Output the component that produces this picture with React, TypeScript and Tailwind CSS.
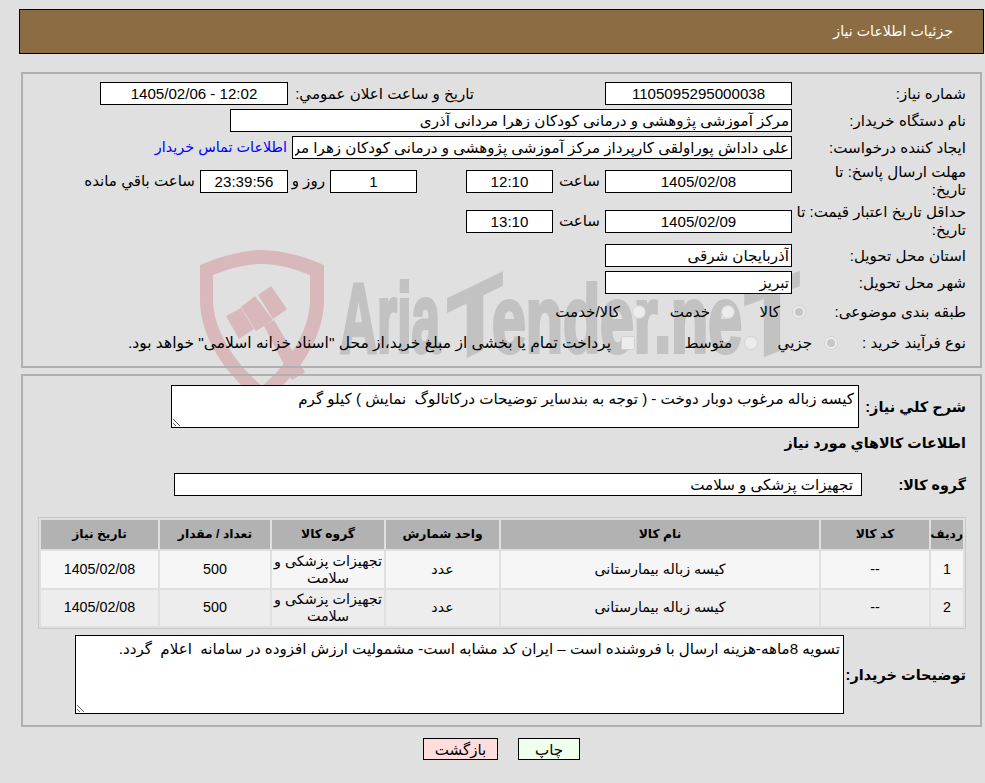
const inputCls = 'h-[23px] border border-black bg-white px-[2px] text-black outline-none';

function Label({ className, children }: { className: string; children: React.ReactNode }) {
  return <div className={`shrink-0 text-right leading-[18px] ${className}`}>{children}</div>;
}

function Radio({ checked }: { checked?: boolean }) {
  return (
    <span className="flex h-[14px] w-[14px] shrink-0 items-center justify-center rounded-full border border-[#d2d2d2] bg-[#ececec]">
      {checked && <span className="h-[8px] w-[8px] rounded-full bg-[#c6c6c6]" />}
    </span>
  );
}

function Watermark() {
  const letters = {
    fill: '#c2c2c2',
    stroke: '#c2c2c2',
    strokeWidth: 4,
    fontWeight: 700,
    fontFamily: "'Liberation Sans', sans-serif",
    lengthAdjust: 'spacingAndGlyphs' as const,
  };
  return (
    <svg className="absolute left-0 top-0 [direction:ltr]" width="985" height="420" viewBox="0 0 985 420">
      <path
        fillRule="evenodd"
        fill="#d8b8ba"
        d="M200 265 C225 255 245 250 262 250 C280 250 300 255 324 265 L324 300 C324 340 295 380 262 402 C230 380 200 340 200 300 Z M213 275 L213 300 C213 332 238 366 262 386 C286 366 310 332 310 300 L310 275 C292 268 278 264 262 264 C246 264 230 268 213 275 Z"
      />
      <path
        fill="#d8b8ba"
        d="M226 316 L241 308 L254 329 L239 339 Z M241 307 L255 296 L273 320 L256 331 Z M258 295 L271 286 L287 309 L273 319 Z M264 326 L274 320 L305 372 L292 380 Z"
      />
      <text {...letters} x="340" y="352" textLength="100" fontSize="98">Aria</text>
      <text {...letters} x="-27" y="0" textLength="54" fontSize="95" transform="translate(475 352) skewY(-26)">T</text>
      <text {...letters} x="492" y="352" textLength="250" fontSize="94">ender.ne</text>
      <text {...letters} x="-27" y="0" textLength="54" fontSize="100" transform="translate(772 352) skewY(-20)">T</text>
    </svg>
  );
}

function TopPanel() {
  return (
    <div className="mx-[2px] mt-[18px] flex h-[296px] flex-col border-2 border-[#b0b0b0] pr-[14px] pt-[8px]">
      <div className="flex h-[23px] items-center">
        <Label className="w-[174px]">شماره نياز:</Label>
        <input readOnly value="1105095295000038" className={`${inputCls} w-[187px] text-center`} />
        <Label className="ms-[131px] w-[181px]">تاريخ و ساعت اعلان عمومي:</Label>
        <input readOnly value="1405/02/06 - 12:02" dir="ltr" className={`${inputCls} mr-[5px] w-[188px] text-center`} />
      </div>
      <div className="mt-[4px] flex h-[23px] items-center">
        <Label className="w-[174px]">نام دستگاه خریدار:</Label>
        <input readOnly value="مرکز آموزشی پژوهشی و درمانی کودکان زهرا مردانی آذری" className={`${inputCls} w-[562px]`} />
      </div>
      <div className="mt-[4px] flex h-[23px] items-center">
        <Label className="w-[174px]">ایجاد کننده درخواست:</Label>
        <input readOnly value="علی داداش پوراولقی کارپرداز مرکز آموزشی پژوهشی و درمانی کودکان زهرا مردانی آذری" className={`${inputCls} w-[500px]`} />
        <a className="ms-[5px] whitespace-nowrap text-[14.4px] text-[#0000ff]">اطلاعات تماس خریدار</a>
      </div>
      <div className="mt-[5px] flex h-[34px] items-center">
        <Label className="w-[174px]">مهلت ارسال پاسخ: تا<br />تاریخ:</Label>
        <input readOnly value="1405/02/08" className={`${inputCls} w-[187px] text-center`} />
        <span className="ms-[5px] w-[47px]">ساعت</span>
        <input readOnly value="12:10" className={`${inputCls} w-[87px] text-center`} />
        <input readOnly value="1" className={`${inputCls} ms-[49px] w-[87px] text-center`} />
        <span className="ms-[5px] w-[37px]">روز و</span>
        <input readOnly value="23:39:56" className={`${inputCls} w-[88px] bg-[#ffffee] text-center`} />
        <span className="ms-[5px] whitespace-nowrap">ساعت باقي مانده</span>
      </div>
      <div className="mt-[6px] flex h-[34px] items-center">
        <Label className="w-[174px]">حداقل تاریخ اعتبار قیمت: تا<br />تاریخ:</Label>
        <input readOnly value="1405/02/09" className={`${inputCls} w-[187px] text-center`} />
        <span className="ms-[5px] w-[47px]">ساعت</span>
        <input readOnly value="13:10" className={`${inputCls} w-[87px] text-center`} />
      </div>
      <div className="mt-[6px] flex h-[23px] items-center">
        <Label className="w-[174px]">استان محل تحویل:</Label>
        <input readOnly value="آذربایجان شرقی" className={`${inputCls} w-[187px]`} />
      </div>
      <div className="mt-[4px] flex h-[23px] items-center">
        <Label className="w-[174px]">شهر محل تحویل:</Label>
        <input readOnly value="تبریز" className={`${inputCls} w-[187px] bg-white`} />
      </div>
      <div className="mt-[8px] flex h-[20px] items-center">
        <Label className="w-[160px] whitespace-nowrap">طبقه بندی موضوعی:</Label>
        <div className="flex w-[71px] items-center gap-[12px]"><Radio checked />کالا</div>
        <div className="flex w-[89px] items-center gap-[11px]"><Radio />خدمت</div>
        <div className="flex items-center gap-[12px] whitespace-nowrap"><Radio />کالا/خدمت</div>
      </div>
      <div className="mt-[11px] flex h-[20px] items-center">
        <Label className="w-[128px] whitespace-nowrap">نوع فرآیند خرید :</Label>
        <div className="flex w-[80px] items-center gap-[12px]"><Radio checked />جزيي</div>
        <div className="flex w-[123px] items-center gap-[12px]"><Radio />متوسط</div>
        <div className="flex items-center gap-[10px] whitespace-nowrap text-[15.5px]">
          <span className="h-[14px] w-[14px] shrink-0 rounded-[2px] border border-[#d2d2d2] bg-[#ececec]" />
          پرداخت تمام یا بخشی از مبلغ خرید،از محل "اسناد خزانه اسلامی" خواهد بود.
        </div>
      </div>
    </div>
  );
}

const headers = ['ردیف', 'کد کالا', 'نام کالا', 'واحد شمارش', 'گروه کالا', 'تعداد / مقدار', 'تاریخ نیاز'];
const rows = ['1', '2'];

function GoodsTable() {
  return (
    <table className="mt-[21px] w-[928px] table-fixed border-separate border-spacing-[2px] border border-[#c8c8c8] text-center text-[14.3px]">
      <colgroup>
        <col className="w-[32px]" />
        <col className="w-[108px]" />
        <col className="w-[318px]" />
        <col className="w-[113px]" />
        <col className="w-[112px]" />
        <col className="w-[110px]" />
        <col className="w-[117px]" />
      </colgroup>
      <thead>
        <tr className="h-[29px] bg-[#b2b2b2] text-[12.3px] font-bold">
          {headers.map((h) => (
            <th key={h} className="p-0 font-bold">{h}</th>
          ))}
        </tr>
      </thead>
      <tbody>
        {rows.map((r) => (
          <tr key={r} className={r === '1' ? 'h-[37px] bg-[#f6f6f6]' : 'h-[36px] bg-[#ededed]'}>
            <td className="p-0">{r}</td>
            <td className="p-0">--</td>
            <td className="p-0">کیسه زباله بیمارستانی</td>
            <td className="p-0">عدد</td>
            <td className="p-0 leading-[17px]">تجهیزات پزشکی و سلامت</td>
            <td className="p-0">500</td>
            <td className="p-0">1405/02/08</td>
          </tr>
        ))}
      </tbody>
    </table>
  );
}

function BottomPanel() {
  return (
    <div className="mx-[2px] mt-[6px] flex h-[353px] flex-col border-2 border-[#b0b0b0] pr-[14px] pt-[9px]">
      <div className="flex items-center">
        <Label className="w-[107px] whitespace-nowrap text-[14.5px] font-bold">شرح كلي نياز:</Label>
        <textarea
          readOnly
          value="کیسه زباله مرغوب دوبار دوخت - ( توجه به بندسایر توضیحات درکاتالوگ  نمایش ) کیلو گرم"
          className="h-[43px] w-[688px] border border-black bg-white px-[4px] py-[2px] outline-none"
        />
      </div>
      <div className="mt-[5px] h-[20px] text-[14.3px] font-bold leading-[20px]">اطلاعات کالاهاي مورد نياز</div>
      <div className="mt-[20px] flex items-center">
        <Label className="w-[104px] whitespace-nowrap text-[14.3px] font-bold">گروه کالا:</Label>
        <input readOnly value="تجهیزات پزشکی و سلامت" className={`${inputCls} w-[688px] !pr-[8px]`} />
      </div>
      <GoodsTable />
      <div className="mt-[6px] flex items-center">
        <Label className="w-[122px] whitespace-nowrap text-[14.5px] font-bold">توضیحات خریدار:</Label>
        <textarea
          readOnly
          value="تسویه 8ماهه-هزینه ارسال با فروشنده است – ایران کد مشابه است- مشمولیت ارزش افزوده در سامانه  اعلام  گردد."
          className="h-[79px] w-[769px] border border-black bg-white px-[3px] py-[2px] outline-none"
        />
      </div>
    </div>
  );
}

export default function App() {
  return (
    <div dir="rtl" className="relative h-[783px] overflow-hidden bg-[#e0e0e0] [font-family:'Liberation_Sans','DejaVu_Sans',sans-serif] text-[15.1px] text-black">
      <Watermark />
      <div className="relative ml-[19px] mr-px pt-[9px]">
        <div className="flex h-[45px] items-center border border-black bg-[#8c6c42] pr-[30px] text-[14.2px] text-white">جزئیات اطلاعات نیاز</div>
        <TopPanel />
        <BottomPanel />
        <div className="mt-[11px] flex justify-center gap-[20px]">
          <button className="h-[22px] w-[62px] border border-black bg-[#eeffee]">چاپ</button>
          <button className="h-[22px] w-[75px] border border-black bg-[#ffdddd]">بازگشت</button>
        </div>
      </div>
    </div>
  );
}
